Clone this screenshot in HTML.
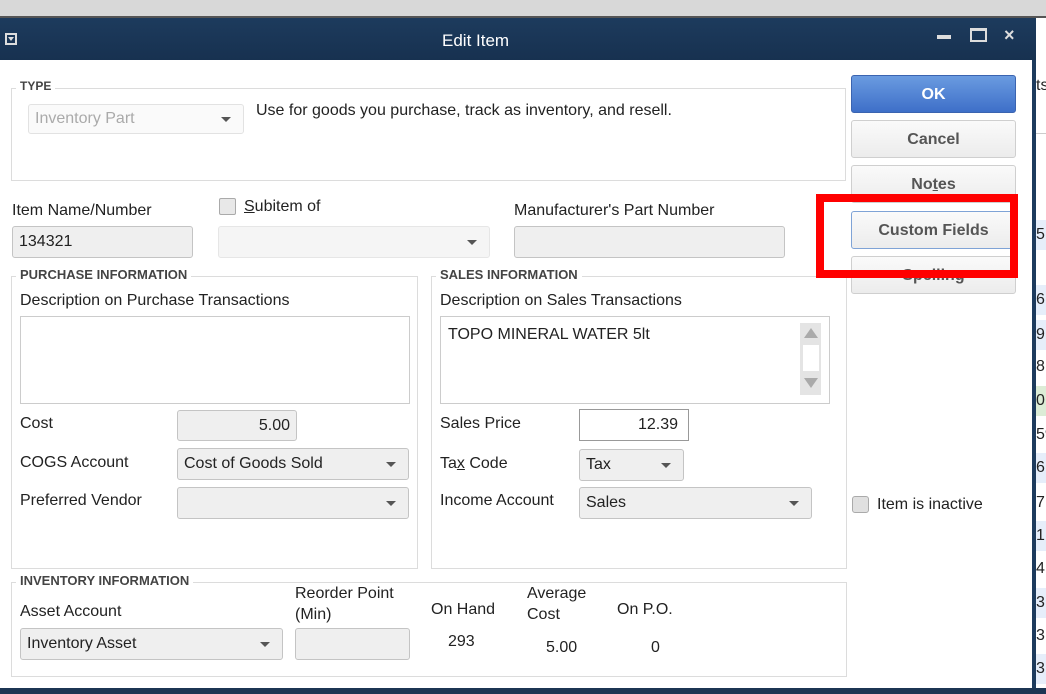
<!DOCTYPE html><html><head><style>
*{box-sizing:border-box;margin:0;padding:0}
body{width:1046px;height:694px;overflow:hidden;position:relative;background:#fff;font-family:"Liberation Sans",sans-serif;font-size:16px;color:#222}
.a{position:absolute}
.t{position:absolute;white-space:nowrap;line-height:1}
.grp{position:absolute;border:1px solid #dcdcdc}
.gl{position:absolute;background:#fff;font-size:13px;font-weight:bold;color:#444;padding:0 4px;top:-9px;left:4px;line-height:1}
.fld{position:absolute;background:#efefef;border:1px solid #c4c4c4;border-radius:3px}
.dd::after{content:"";position:absolute;right:12px;top:50%;margin-top:-2px;border-left:5px solid transparent;border-right:5px solid transparent;border-top:5px solid #555}
.fld span{position:absolute;left:6px;top:50%;transform:translateY(-50%);white-space:nowrap}
.btn{position:absolute;left:851px;width:165px;height:38px;border:1px solid #cfcfcf;border-radius:3px;background:linear-gradient(#fafafa,#ececec);font-weight:bold;color:#555;text-align:center;line-height:38px;font-size:16px}
.r{position:absolute;left:1036px;width:10px;height:30px;background:#e6eefa;font-size:16px;line-height:30px}
</style></head><body>
<div class="a" style="left:0;top:0;width:1046px;height:18px;background:#d8d8d8;border-bottom:2px solid #555"></div>
<div class="a" style="left:0;top:18px;width:1036px;height:42px;background:linear-gradient(#1d3b5d,#173150)"></div>
<div class="a" style="left:5px;top:33px;width:12px;height:12px;border:2px solid #ddd"></div>
<div class="a" style="left:8px;top:37px;border-left:3px solid transparent;border-right:3px solid transparent;border-top:4px solid #ddd"></div>
<div class="t" style="left:442px;top:32px;color:#fff;font-size:17px">Edit Item</div>
<div class="a" style="left:937px;top:35px;width:14px;height:4px;background:#ddd"></div>
<div class="a" style="left:970px;top:28px;width:17px;height:14px;border:2px solid #ddd;border-top-width:3px"></div>
<div class="t" style="left:1004px;top:26px;color:#ddd;font-size:18px;font-weight:bold">×</div>
<div class="a" style="left:1032px;top:60px;width:4px;height:634px;background:#1d3b5d"></div>
<div class="a" style="left:1036px;top:60px;width:10px;height:634px;background:#fff"></div>
<div class="a" style="left:1036px;top:133px;width:10px;height:1px;background:#ccc"></div>
<div class="r" style="top:220px">5</div>
<div class="r" style="top:252px;background:#fff"></div>
<div class="r" style="top:285px">6</div>
<div class="r" style="top:320px">9</div>
<div class="r" style="top:352px;background:#fff">8</div>
<div class="r" style="top:386px;background:#dcecd6">0</div>
<div class="r" style="top:420px;background:#fff">59</div>
<div class="r" style="top:453px">6</div>
<div class="r" style="top:488px;background:#fff">7</div>
<div class="r" style="top:521px">1</div>
<div class="r" style="top:554px;background:#fff">4</div>
<div class="r" style="top:588px">3</div>
<div class="r" style="top:621px;background:#fff">3</div>
<div class="r" style="top:654px">3</div>
<div class="a" style="left:0;top:688px;width:1046px;height:6px;background:#1c3553"></div>

<div class="grp" style="left:11px;top:88px;width:835px;height:93px"><div class="gl" style="font-size:12px">TYPE</div></div>
<div class="fld dd" style="left:28px;top:104px;width:216px;height:30px;background:#fafafa;border-color:#e2e2e2"><span style="color:#aaa">Inventory Part</span></div>
<div class="t" style="left:256px;top:103px">Use for goods you purchase, track as inventory, and resell.</div>

<div class="t" style="left:12px;top:203px">Item Name/Number</div>
<div class="fld" style="left:12px;top:226px;width:181px;height:32px"><span>134321</span></div>
<div class="a" style="left:219px;top:198px;width:17px;height:17px;border:1px solid #aaa;border-radius:2px;background:#e8e8e8"></div>
<div class="t" style="left:244px;top:199px"><u>S</u>ubitem of</div>
<div class="fld dd" style="left:218px;top:226px;width:272px;height:32px;background:#f5f5f5;border-color:#e6e6e6"></div>
<div class="t" style="left:514px;top:203px">Manufacturer's Part Number</div>
<div class="fld" style="left:514px;top:226px;width:271px;height:32px"></div>

<div class="grp" style="left:11px;top:276px;width:407px;height:293px"><div class="gl">PURCHASE INFORMATION</div></div>
<div class="t" style="left:20px;top:293px">Description on Purchase Transactions</div>
<div class="a" style="left:20px;top:316px;width:390px;height:88px;border:1px solid #ccc"></div>
<div class="t" style="left:20px;top:416px">Cost</div>
<div class="fld" style="left:177px;top:410px;width:120px;height:31px"><span style="left:auto;right:6px">5.00</span></div>
<div class="t" style="left:20px;top:455px">COGS Account</div>
<div class="fld dd" style="left:177px;top:448px;width:232px;height:32px"><span>Cost of Goods Sold</span></div>
<div class="t" style="left:20px;top:493px">Preferred Vendor</div>
<div class="fld dd" style="left:177px;top:487px;width:232px;height:32px"></div>

<div class="grp" style="left:431px;top:276px;width:416px;height:293px"><div class="gl">SALES INFORMATION</div></div>
<div class="t" style="left:440px;top:293px">Description on Sales Transactions</div>
<div class="a" style="left:440px;top:316px;width:390px;height:88px;border:1px solid #ccc"></div>
<div class="t" style="left:448px;top:327px">TOPO MINERAL WATER 5lt</div>
<div class="a" style="left:800px;top:323px;width:21px;height:72px;background:#e4e4e4"></div>
<div class="a" style="left:803px;top:345px;width:16px;height:26px;background:#fff"></div>
<div class="a" style="left:804px;top:328px;border-left:7px solid transparent;border-right:7px solid transparent;border-bottom:10px solid #aaa"></div>
<div class="a" style="left:804px;top:378px;border-left:7px solid transparent;border-right:7px solid transparent;border-top:10px solid #aaa"></div>
<div class="t" style="left:440px;top:416px">Sales Price</div>
<div class="a" style="left:579px;top:409px;width:110px;height:32px;border:1px solid #999;background:#fff"></div>
<div class="t" style="left:638px;top:417px">12.39</div>
<div class="t" style="left:440px;top:456px">Ta<u>x</u> Code</div>
<div class="fld dd" style="left:579px;top:449px;width:105px;height:32px"><span>Tax</span></div>
<div class="t" style="left:440px;top:493px">Income Account</div>
<div class="fld dd" style="left:579px;top:487px;width:233px;height:32px"><span>Sales</span></div>

<div class="grp" style="left:11px;top:582px;width:836px;height:95px"><div class="gl">INVENTORY INFORMATION</div></div>
<div class="t" style="left:20px;top:604px">Asset Account</div>
<div class="t" style="left:295px;top:583px;line-height:21px">Reorder Point<br>(Min)</div>
<div class="t" style="left:431px;top:602px">On Hand</div>
<div class="t" style="left:527px;top:583px;line-height:21px">Average<br>Cost</div>
<div class="t" style="left:617px;top:602px">On P.O.</div>
<div class="fld dd" style="left:20px;top:628px;width:263px;height:32px"><span>Inventory Asset</span></div>
<div class="fld" style="left:295px;top:628px;width:115px;height:32px"></div>
<div class="t" style="left:448px;top:634px">293</div>
<div class="t" style="left:546px;top:640px">5.00</div>
<div class="t" style="left:651px;top:640px">0</div>

<div class="btn" style="top:75px;background:linear-gradient(#6a9be0,#3e6fc8);border-color:#3b64b0;color:#fff">OK</div>
<div class="btn" style="top:120px">Cancel</div>
<div class="btn" style="top:165px">No<u>t</u>es</div>
<div class="btn" style="top:211px;border-color:#7fa3d6">Custom Fields</div>
<div class="btn" style="top:256px">Spellin<u>g</u></div>
<div class="a" style="left:816px;top:194px;width:202px;height:84px;border:8px solid #f00"></div>
<div class="a" style="left:852px;top:496px;width:17px;height:17px;border:1px solid #aaa;border-radius:3px;background:#e0e0e0"></div>
<div class="t" style="left:877px;top:497px">Item is inactive</div>
<div class="t" style="left:1036px;top:78px">ts</div>
</body></html>
